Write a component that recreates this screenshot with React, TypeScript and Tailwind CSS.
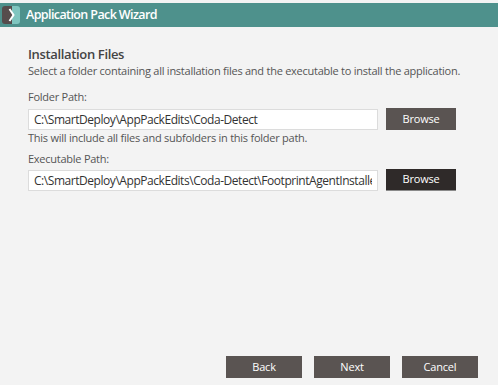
import React from "react";

const font = { fontFamily: '"Open Sans", "Noto Sans", sans-serif' };

export default function App() {
  return (
    <div className="flex flex-col w-[498px] h-[385px] bg-[#f3f3f3] overflow-hidden" style={font}>
      {/* title bar */}
      <div className="mt-[3px] h-[24px] bg-[#4e918c] flex items-center">
        <div className="ml-[2px] w-[18px] h-[18px] flex rounded-[3px] overflow-hidden relative">
          <div className="w-[10px] h-full bg-[#564c4c]" />
          <div className="flex-1 h-full bg-[#7fc5bf]" />
          <svg className="absolute left-[6px] top-[2px]" width="8" height="14" viewBox="0 0 8 14">
            <path d="M1.5 1 L5.5 7 L1.5 13" fill="none" stroke="#ffffff" strokeWidth="2" />
          </svg>
        </div>
        <span className="ml-[6px] text-white font-semibold text-[12.5px] tracking-[-0.6px]">
          Application Pack Wizard
        </span>
      </div>

      <div className="flex-1 flex flex-col px-[28px] pt-[18px]">
        <h2 className="text-[13px] font-semibold text-[#444] leading-[18px] tracking-[-0.35px]">Installation Files</h2>
        <p className="text-[11px] text-[#555] leading-[16px] tracking-[-0.25px]">
          Select a folder containing all installation files and the executable to install the application.
        </p>

        <label className="mt-[10px] text-[11px] text-[#555] leading-[16px] tracking-[-0.25px]">Folder Path:</label>
        <div className="flex items-center gap-[8px] mt-[3px]">
          <input
            readOnly
            value="C:\SmartDeploy\AppPackEdits\Coda-Detect"
            className="w-[350px] h-[21px] bg-white border border-[#dcdcdc] px-[5px] text-[12px] text-[#333] tracking-[-0.45px] outline-none"
          />
          <button className="w-[70px] h-[22px] bg-[#5a5452] text-white text-[11px] tracking-[-0.2px]">Browse</button>
        </div>
        <p className="text-[11px] text-[#555] leading-[16px] tracking-[-0.25px]">
          This will include all files and subfolders in this folder path.
        </p>

        <label className="mt-[5px] text-[11px] text-[#555] leading-[16px] tracking-[-0.25px]">Executable Path:</label>
        <div className="flex items-center gap-[8px] mt-[2px]">
          <input
            readOnly
            value="C:\SmartDeploy\AppPackEdits\Coda-Detect\FootprintAgentInstaller.exe"
            className="w-[350px] h-[21px] bg-white border border-[#dcdcdc] px-[5px] text-[12px] text-[#333] tracking-[-0.45px] outline-none"
          />
          <button className="w-[70px] h-[22px] bg-[#2f2a29] border-b border-[#8a8a8a] text-white text-[11px] tracking-[-0.2px]">Browse</button>
        </div>

        <div className="mt-auto mb-[7px] flex justify-end gap-[12px] mr-[-8px]">
          <button className="w-[76px] h-[22px] bg-[#5a5452] text-white text-[11px] tracking-[-0.2px]">Back</button>
          <button className="w-[76px] h-[22px] bg-[#5a5452] text-white text-[11px] tracking-[-0.2px]">Next</button>
          <button className="w-[76px] h-[22px] bg-[#5a5452] text-white text-[11px] tracking-[-0.2px]">Cancel</button>
        </div>
      </div>
    </div>
  );
}
